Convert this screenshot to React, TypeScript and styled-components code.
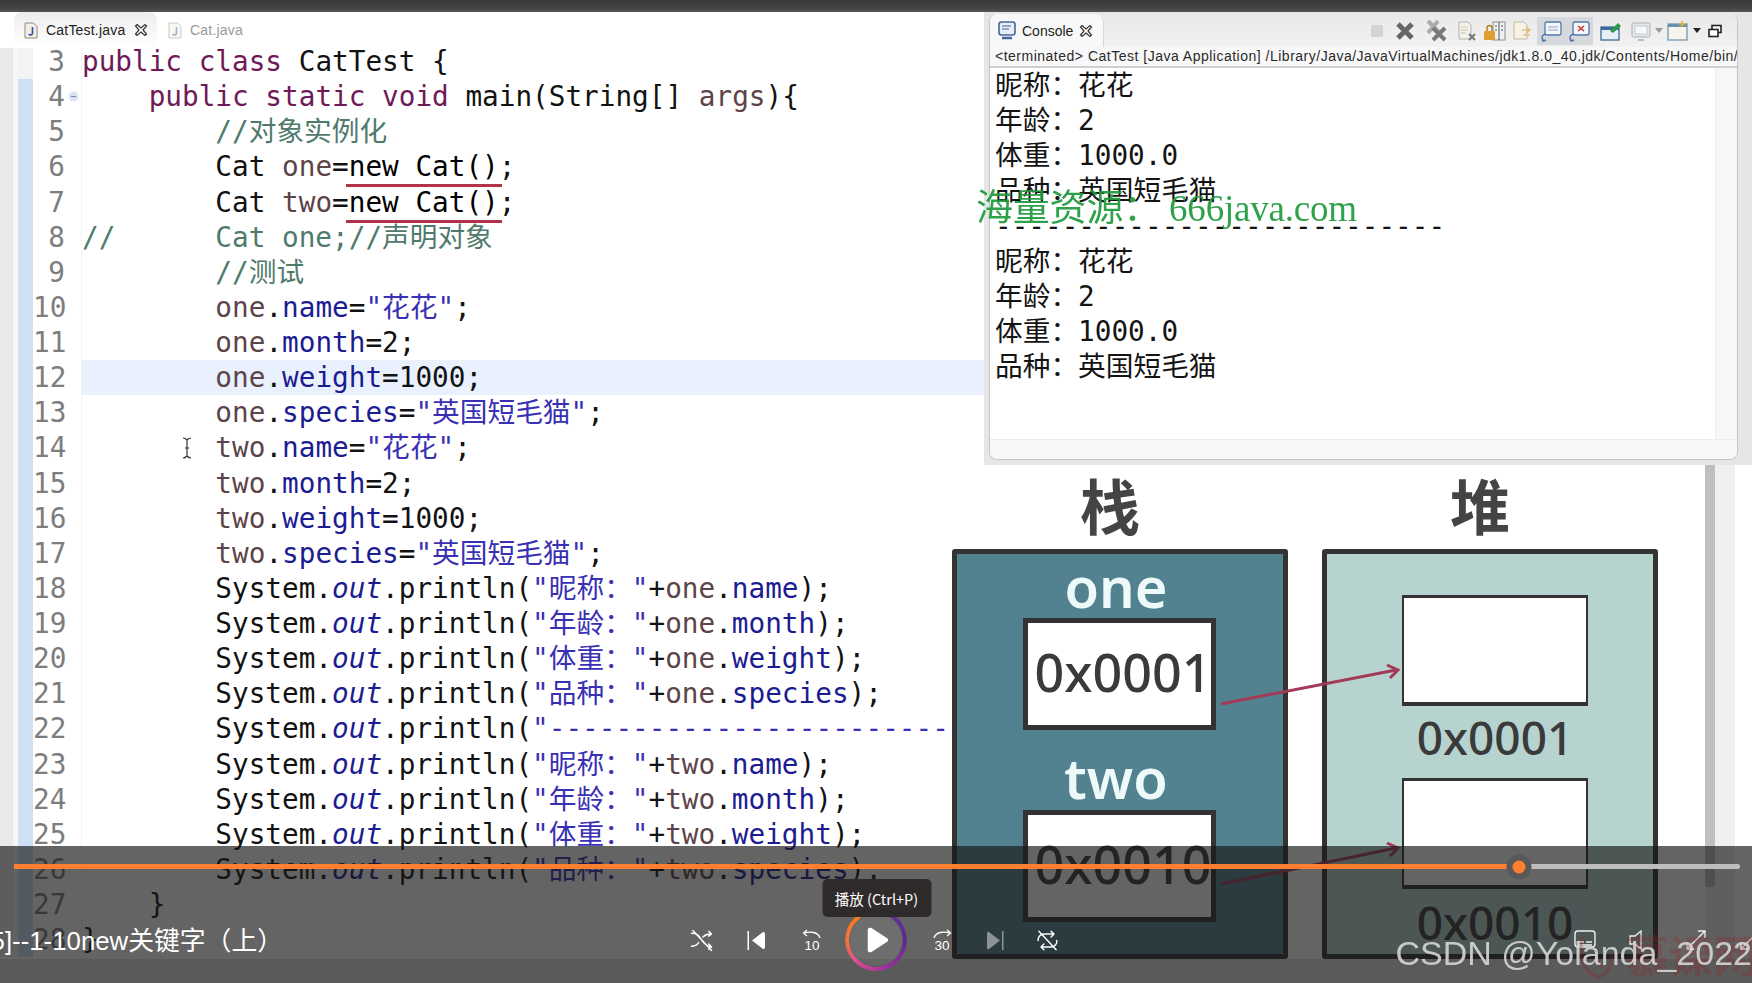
import React from "react";
import styled, { createGlobalStyle } from "styled-components";

const MONO = `"DejaVu Sans Mono", "Noto Sans CJK SC", monospace`;
const LINE = 35.14;

const GlobalStyle = createGlobalStyle`
  html, body {
    margin: 0;
    padding: 0;
    background: #e0e0e0;
    overflow: hidden;
  }
  * {
    box-sizing: border-box;
  }
`;

const Screen = styled.div`
  position: relative;
  width: 1752px;
  height: 983px;
  overflow: hidden;
  background: #e0e0e0;
  font-family: "Liberation Sans", sans-serif;
`;

const TopBar = styled.div`
  height: 12px;
  background: linear-gradient(#3a3a3a, #444 70%, #555);
`;

const Main = styled.div`
  display: flex;
  height: 947px;
  overflow: hidden;
  background: #fff;
`;

/* editor */

const Editor = styled.div`
  width: 984px;
  flex: none;
  overflow: hidden;
`;

const TabBar = styled.div`
  position: relative;
  z-index: 1;
  display: flex;
  align-items: center;
  height: 36px;
  padding-left: 14px;
  background: #fff;
`;

const EditorTab = styled.div<{ $active?: boolean }>`
  display: flex;
  align-items: center;
  height: 36px;
  padding: 0 9px 0 ${(p) => (p.$active ? 10 : 11)}px;
  gap: 8px;
  width: ${(p) => (p.$active ? "143px" : "auto")};
  font-size: 14px;
  letter-spacing: 0.2px;
  color: ${(p) => (p.$active ? "#222" : "#9a9a9a")};
  border-radius: 8px 8px 0 0;
  background: ${(p) => (p.$active ? "linear-gradient(#ededed, #f8f8f8 60%, #fff)" : "transparent")};
`;

const TabLabel = styled.span`
  flex: 1;
  white-space: nowrap;
`;

const CodeList = styled.div`
  margin-top: -4px;
  font-family: ${MONO};
  font-size: 27.7px;
`;

const CodeRow = styled.div`
  display: flex;
  height: ${LINE}px;
  line-height: ${LINE}px;
  white-space: pre;
`;

const LeftEdge = styled.div`
  width: 18px;
  flex: none;
  background: linear-gradient(90deg, #e9e9e9 13px, #f6f6f6 13px);
`;

const Ruler = styled.div<{ $changed: boolean }>`
  width: 15px;
  flex: none;
  background: ${(p) => (p.$changed ? "#cfe0f5" : "#f3f3f3")};
`;

const LineNo = styled.div`
  width: 32px;
  flex: none;
  text-align: right;
  color: #7d7d7d;
`;

const FoldCell = styled.div`
  display: flex;
  align-items: center;
  justify-content: center;
  width: 17px;
  flex: none;
  border-right: 1px solid #f3f3f3;
`;

const CodeCell = styled.div<{ $current?: boolean }>`
  flex: 1;
  background: ${(p) => (p.$current ? "#e8f1fd" : "transparent")};
`;

const COLORS = {
  plain: "#121212",
  kw: "#6f1a57",
  local: "#5c4448",
  field: "#1c1c92",
  str: "#3a30b4",
  note: "#4f7a6c",
  num: "#121212",
};

type Kind = keyof typeof COLORS;

const Tok = styled.span<{ $k: Kind; $italic?: boolean }>`
  color: ${(p) => COLORS[p.$k]};
  font-style: ${(p) => (p.$italic ? "italic" : "normal")};
`;

const RedLine = styled.span`
  position: relative;
  &::after {
    content: "";
    position: absolute;
    left: -3px;
    right: -3px;
    bottom: -4px;
    height: 3px;
    background: #b5304a;
  }
`;

const IBeam = styled.svg`
  position: absolute;
  left: 181px;
  top: 437px;
`;

type Piece = [Kind, string] | ["out", string] | ["red", string];
const I = "        ";

const println = (label: string, v: string, f: string): Piece[] => [
  ["plain", I + "System."],
  ["out", "out"],
  ["plain", ".println("],
  ["str", `"${label}："`],
  ["plain", "+"],
  ["local", v],
  ["plain", "."],
  ["field", f],
  ["plain", ");"],
];

const assign = (v: string, f: string, val: Piece): Piece[] => [
  ["plain", I],
  ["local", v],
  ["plain", "."],
  ["field", f],
  ["plain", "="],
  val,
  ["plain", ";"],
];

const CODE: Piece[][] = [
  [["kw", "public class"], ["plain", " CatTest {"]],
  [["plain", "    "], ["kw", "public static void"], ["plain", " main(String[] "], ["local", "args"], ["plain", "){"]],
  [["note", I + "//对象实例化"]],
  [["plain", I + "Cat "], ["local", "one"], ["plain", "="], ["red", "new Cat()"], ["plain", ";"]],
  [["plain", I + "Cat "], ["local", "two"], ["plain", "="], ["red", "new Cat()"], ["plain", ";"]],
  [["note", "//      Cat one;//声明对象"]],
  [["note", I + "//测试"]],
  assign("one", "name", ["str", '"花花"']),
  assign("one", "month", ["num", "2"]),
  assign("one", "weight", ["num", "1000"]),
  assign("one", "species", ["str", '"英国短毛猫"']),
  assign("two", "name", ["str", '"花花"']),
  assign("two", "month", ["num", "2"]),
  assign("two", "weight", ["num", "1000"]),
  assign("two", "species", ["str", '"英国短毛猫"']),
  println("昵称", "one", "name"),
  println("年龄", "one", "month"),
  println("体重", "one", "weight"),
  println("品种", "one", "species"),
  [["plain", I + "System."], ["out", "out"], ["plain", ".println("], ["str", '"----------------------------------"'], ["plain", ");"]],
  println("昵称", "two", "name"),
  println("年龄", "two", "month"),
  println("体重", "two", "weight"),
  println("品种", "two", "species"),
  [["plain", "    }"]],
  [["plain", "}"]],
];

const renderPiece = (p: Piece, i: number) => {
  if (p[0] === "out") return <Tok key={i} $k="field" $italic>{p[1]}</Tok>;
  if (p[0] === "red") return <RedLine key={i}>{p[1]}</RedLine>;
  return <Tok key={i} $k={p[0]}>{p[1]}</Tok>;
};

const JavaFileIcon = ({ faded }: { faded?: boolean }) => (
  <svg width="14" height="17" viewBox="0 0 14 17" opacity={faded ? 0.45 : 1}>
    <path d="M1 1h8.5L13 4.5V16H1z" fill="#f3efe4" stroke="#8f8a7c" />
    <path d="M8.5 5v6.2c0 1.9-2.8 2.2-3.8.8" fill="none" stroke="#3a56a8" strokeWidth="1.7" />
  </svg>
);

const CloseGlyph = () => (
  <svg width="14" height="14" viewBox="0 0 14 14">
    <path d="M3 1.5 7 5l4-3.500 1.500 1.500L9 7l3.500 4-1.500 1.500L7 9l-4 3.500-1.500-1.500L5 7 1.500 3z" fill="#fff" stroke="#333" strokeWidth="1.200" />
  </svg>
);

/* console */

const RightSide = styled.div`
  flex: 1;
  min-width: 0;
  display: flex;
  flex-direction: column;
`;

const ConsoleWell = styled.div`
  height: 453px;
  flex: none;
  padding: 2px 14px 5px 5px;
  background: #e6e6e6;
`;

const ConsolePanel = styled.div`
  display: flex;
  flex-direction: column;
  height: 100%;
  border: 1px solid #c4c4c4;
  border-top: none;
  border-radius: 8px;
  background: #f7f7f7;
  overflow: hidden;
`;

const ConsoleHead = styled.div`
  display: flex;
  align-items: center;
  height: 33px;
  flex: none;
  padding-right: 10px;
  background: linear-gradient(#e9e9e9, #f2f2f2);
`;

const ConsoleTab = styled.div`
  display: flex;
  align-items: center;
  gap: 6px;
  width: 114px;
  height: 33px;
  padding-left: 8px;
  font-size: 14px;
  color: #222;
  background: #f8f8f8;
  border-radius: 8px 8px 0 0;
  border-right: 1px solid #d8d8d8;
`;

const Toolbar = styled.div`
  display: flex;
  align-items: center;
  margin-left: auto;
`;

const ToolSlot = styled.div<{ $on?: boolean; $w?: number }>`
  display: flex;
  align-items: center;
  justify-content: center;
  width: ${(p) => p.$w ?? 28}px;
  height: 28px;
  background: ${(p) => (p.$on ? "#d5d8dc" : "transparent")};
`;

const InfoLine = styled.div`
  height: 21px;
  flex: none;
  padding-left: 5px;
  font-size: 14px;
  letter-spacing: 0.5px;
  line-height: 19px;
  color: #2a2a2a;
  white-space: nowrap;
  overflow: hidden;
  background: #f8f8f8;
  border-bottom: 2px solid #cfcfcf;
`;

const ConsoleBody = styled.div`
  flex: 1;
  margin-right: 21px;
  padding-left: 5px;
  background: #fff;
  font-family: ${MONO};
  font-size: 27.7px;
  color: #141414;
  border-right: 1px solid #ececec;
`;

const OutLine = styled.div`
  height: ${LINE}px;
  line-height: ${LINE}px;
  white-space: pre;
`;

const ConsoleFoot = styled.div`
  height: 20px;
  flex: none;
  background: #f8f8f8;
  border-top: 1px solid #ececec;
`;

const Watermark = styled.div`
  position: absolute;
  left: 976px;
  top: 186px;
  font-family: "Liberation Serif", "Noto Sans CJK SC", serif;
  font-size: 37px;
  letter-spacing: -0.2px;
  line-height: 46px;
  color: #1f9a3c;
  white-space: pre;
  opacity: 0.92;
`;

/* diagram */

const DiagramPane = styled.div`
  position: relative;
  flex: 1;
  display: flex;
  margin-left: -32px;
  background: #fff;
`;

const Diagram = styled.div`
  display: grid;
  grid-template-columns: 336px 336px;
  grid-template-rows: 84px 410px;
  column-gap: 34px;
  width: 706px;
  flex: none;
`;

const Heading = styled.div`
  display: flex;
  align-items: center;
  justify-content: center;
  padding: 0 20px 8px 0;
  font-family: "Noto Sans CJK SC", sans-serif;
  font-size: 60px;
  font-weight: 700;
  color: #444;
`;

const MemoryBox = styled.div<{ $heap?: boolean }>`
  display: grid;
  justify-items: center;
  align-items: center;
  grid-template-rows: ${(p) => (p.$heap ? "41px 111px 72px 111px 1fr" : "64px 112px 80px 112px 1fr")};
  border: 5px solid #333;
  border-radius: 3px;
  background: ${(p) => (p.$heap ? "#b7d3cf" : "#52828f")};
`;

const VarName = styled.div<{ $low?: boolean }>`
  padding-top: ${(p) => (p.$low ? 13 : 0)}px;
  margin-right: 8px;
  font-family: "Noto Sans", sans-serif;
  font-size: 56px;
  font-weight: 600;
  line-height: 64px;
  color: #eefafa;
`;

const ValueCell = styled.div`
  display: flex;
  align-items: center;
  justify-content: center;
  width: 193px;
  height: 100%;
  margin-left: -2px;
  padding: 0 0 5px 8px;
  border: 5px solid #333;
  background: #fff;
  font-family: "Noto Sans", sans-serif;
  font-size: 52px;
  font-weight: 500;
  color: #3a3a3a;
`;

const HeapCell = styled.div`
  width: 186px;
  height: 100%;
  margin-left: 10px;
  border: solid #333;
  border-width: 3px 2px 4px;
  background: #fff;
`;

const Spacer = styled.div``;

const Address = styled.div<{ $first?: boolean }>`
  margin-left: 10px;
  padding-bottom: ${(p) => (p.$first ? 10 : 0)}px;
  font-family: "Noto Sans", sans-serif;
  font-size: 46px;
  font-weight: 500;
  line-height: 60px;
  color: #3a3a3a;
`;

const Arrows = styled.svg`
  position: absolute;
  left: 0;
  top: 0;
`;

const ScrollTrack = styled.div`
  width: 30px;
  flex: none;
  margin-left: 47px;
  background: #f0f0f0;
`;

const ScrollThumb = styled.div`
  width: 10px;
  height: 422px;
  background: #bfbfbf;
  border-radius: 0 0 4px 4px;
`;

/* player */

const Player = styled.div`
  position: absolute;
  left: 0;
  right: 0;
  top: 846px;
  bottom: 0;
  overflow: hidden;
  background: rgba(24, 24, 24, 0.67);
`;

const Progress = styled.div`
  position: relative;
  height: 5px;
  margin: 18px 12px 0 14px;
  border-radius: 2px;
  background: #bdbdbd;
`;

const ProgressFill = styled.div<{ $pct: number }>`
  width: ${(p) => p.$pct}%;
  height: 100%;
  background: #ff7f30;
`;

const ProgressThumb = styled.div<{ $pct: number }>`
  position: absolute;
  left: ${(p) => p.$pct}%;
  top: 50%;
  width: 25px;
  height: 25px;
  transform: translate(-50%, -50%);
  border-radius: 50%;
  border: 6px solid #585858;
  background: #ff7f30;
`;

const ControlRow = styled.div`
  display: flex;
  align-items: center;
  height: 60px;
  margin-top: 41px;
`;

const Title = styled.div`
  display: flex;
  justify-content: flex-end;
  width: 283px;
  margin-right: 391px;
  padding-bottom: 3px;
  flex: none;
  overflow: hidden;
  font-family: "Liberation Sans", "Noto Sans CJK SC", sans-serif;
  font-size: 25.8px;
  color: #fff;
  white-space: nowrap;
`;

const CtrlButton = styled.div<{ $w?: number }>`
  position: relative;
  display: flex;
  align-items: center;
  justify-content: center;
  flex: none;
  width: ${(p) => p.$w ?? 55}px;
  height: 60px;
`;

const RightControls = styled.div`
  display: flex;
  margin-left: 483px;
`;

const Ring = styled.div`
  position: absolute;
  left: 6px;
  top: -1px;
  width: 62px;
  height: 62px;
  border-radius: 50%;
  background: conic-gradient(#6d2f97 0deg, #5a2c8c 90deg, #a5309c 165deg, #dd4f8e 225deg, #f2703f 265deg, #f47b20 320deg, #6d2f97 350deg);
  -webkit-mask: radial-gradient(circle, transparent 26.5px, #000 27px);
  mask: radial-gradient(circle, transparent 26.5px, #000 27px);
`;

const RingInner = styled.div`
  position: absolute;
  left: 11px;
  top: 4px;
  width: 52px;
  height: 52px;
  border-radius: 50%;
  background: rgba(255, 255, 255, 0.07);
`;

const Tooltip = styled.div`
  position: absolute;
  left: 50%;
  bottom: 53px;
  display: flex;
  align-items: center;
  justify-content: center;
  width: 109px;
  height: 38px;
  transform: translateX(-50%);
  border-radius: 5px;
  background: #2f2b2b;
  font-family: "Noto Sans CJK SC", sans-serif;
  font-size: 14.5px;
  color: #fff;
  white-space: nowrap;
`;

const CsdnMark = styled.div`
  position: absolute;
  right: 0;
  bottom: 10px;
  font-size: 34px;
  line-height: 40px;
  color: #d6d6d6;
  white-space: nowrap;
  opacity: 0.9;
`;

const SchoolMark = styled.div`
  position: absolute;
  left: 1625px;
  bottom: 4px;
  font-family: "Noto Sans CJK SC", sans-serif;
  font-size: 44px;
  line-height: 50px;
  font-weight: 700;
  color: rgba(150, 40, 40, 0.3);
  white-space: nowrap;
`;

const Flame = styled.svg`
  position: absolute;
  left: 1575px;
  bottom: 2px;
`;

const Ico = ({ size = 23, children }: { size?: number; children: React.ReactNode }) => (
  <svg width={size} height={size} viewBox="0 0 32 32" fill="none" stroke="#fff" strokeWidth="2" strokeLinecap="round" strokeLinejoin="round">
    {children}
  </svg>
);

const Seek = ({ back, n }: { back?: boolean; n: string }) => (
  <svg width="20" height="22" viewBox="0 0 20 22" fill="none" stroke="#fff" strokeWidth="1.300">
    <g transform={back ? undefined : "translate(20 0) scale(-1 1)"}>
      <path d="M5 1 1.500 4 5 7" />
      <path d="M2 4c7-2 14-1 16 5" />
    </g>
    <text x="10" y="20.500" textAnchor="middle" fontFamily="Liberation Sans" fontSize="13.500" fill="#fff" stroke="none">{n}</text>
  </svg>
);

const Tool = {
  Stop: () => <svg width="16" height="16"><rect x="2" y="2" width="12" height="12" rx="1.500" fill="#d4d4d4" /></svg>,
  X: () => (
    <svg width="22" height="20" viewBox="0 0 22 20"><path d="M4 3 18 17M18 3 4 17" stroke="#666" strokeWidth="5" /></svg>
  ),
  XX: () => (
    <svg width="24" height="22" viewBox="0 0 24 22">
      <path d="M4 1l12 12M14 1 4 13" stroke="#aaa" strokeWidth="4" />
      <path d="M9 8l12 12M21 8 9 20" stroke="#777" strokeWidth="4" />
    </svg>
  ),
  Page: ({ c }: { c: string }) => (
    <svg width="20" height="22" viewBox="0 0 20 22">
      <path d="M2 2h9l3 3v14H2z" fill="#f4f1e6" stroke="#b3b3b3" />
      <path d="M4 7h7M4 10h7M4 13h5" stroke="#c4c4c4" />
      <path d="M12 14l6 6M18 14l-6 6" stroke={c} strokeWidth="2" />
    </svg>
  ),
  Lock: () => (
    <svg width="24" height="22" viewBox="0 0 24 22">
      <rect x="10" y="2" width="12" height="18" fill="#eef0f2" stroke="#8d8d8d" />
      <path d="M16 2v18M12 6h2M18 6h2M12 10h2M18 10h2" stroke="#555" />
      <rect x="1" y="11" width="11" height="9" rx="1" fill="#e0a030" />
      <path d="M4 11V8a2.500 2.500 0 0 1 5 0v3" fill="none" stroke="#b67f1c" strokeWidth="1.500" />
    </svg>
  ),
  Swap: () => (
    <svg width="22" height="22" viewBox="0 0 22 22">
      <path d="M2 2h10l3 3v14H2z" fill="#f6f2e4" stroke="#c0bba8" />
      <path d="M10 10h8M14 7l4 3-4 3M18 15h-7" fill="none" stroke="#e0c080" strokeWidth="1.500" />
    </svg>
  ),
  Bubble: ({ red }: { red?: boolean }) => (
    <svg width="24" height="24" viewBox="0 0 24 24">
      <rect x="6" y="3" width="16" height="13" rx="2" fill="#f3f6fa" stroke="#5278a8" strokeWidth="1.300" />
      {red ? <path d="M11 7l6 5M17 7l-6 5" stroke="#c83a3a" strokeWidth="1.600" /> : <path d="M9 8h10M9 11h10" stroke="#8aa4c4" />}
      <path d="M7 15c-4 1-5 3-3 6M3 19l1 3 3-1" fill="none" stroke="#4b72a6" strokeWidth="1.400" />
    </svg>
  ),
  Pin: () => (
    <svg width="24" height="22" viewBox="0 0 24 22">
      <rect x="2" y="7" width="18" height="13" fill="#e6eef6" stroke="#3f6b96" strokeWidth="1.300" />
      <rect x="2" y="7" width="18" height="3" fill="#3f6b96" />
      <path d="M11 11 19 3l3 3-8 7z" fill="#2f9a48" />
    </svg>
  ),
  Screen: () => (
    <svg width="22" height="22" viewBox="0 0 22 22">
      <rect x="2" y="3" width="18" height="14" rx="1.500" fill="#e4e8ec" stroke="#a8b0b8" />
      <rect x="5" y="6" width="12" height="8" fill="#f6f8fa" stroke="#c4cad0" />
      <path d="M8 20h6" stroke="#a8b0b8" strokeWidth="1.500" />
    </svg>
  ),
  Window: () => (
    <svg width="24" height="22" viewBox="0 0 24 22">
      <rect x="2" y="4" width="19" height="16" fill="#f6f4ea" stroke="#6d8fae" strokeWidth="1.200" />
      <rect x="2" y="4" width="19" height="3" fill="#6d8fae" />
      <path d="M16 1v6M13 4h6" stroke="#e0b040" strokeWidth="1.500" />
    </svg>
  ),
  Caret: ({ c }: { c: string }) => <svg width="8" height="6"><path d="M0 0h8L4 5z" fill={c} /></svg>,
  Restore: () => (
    <svg width="16" height="14" viewBox="0 0 16 14" fill="#fff" stroke="#222" strokeWidth="1.600">
      <rect x="5" y="1.500" width="9" height="7" />
      <rect x="2" y="5.500" width="9" height="7" />
    </svg>
  ),
};

const ConsoleIcon = () => (
  <svg width="18" height="19" viewBox="0 0 18 19">
    <rect x="1" y="1" width="16" height="13" rx="2.500" fill="#e8eef8" stroke="#44659e" strokeWidth="1.600" />
    <path d="M4 5h9M4 8h7" stroke="#44659e" />
    <path d="M4 17h10" stroke="#44659e" strokeWidth="2.500" />
  </svg>
);

const OUTPUT_BLOCK = ["昵称：花花", "年龄：2", "体重：1000.0", "品种：英国短毛猫"];

const App: React.FC = () => {
  return (
    <Screen>
      <GlobalStyle />
      <TopBar />
      <Main>
        <Editor>
          <TabBar>
            <EditorTab $active>
              <JavaFileIcon />
              <TabLabel>CatTest.java</TabLabel>
              <CloseGlyph />
            </EditorTab>
            <EditorTab>
              <JavaFileIcon faded />
              <TabLabel>Cat.java</TabLabel>
            </EditorTab>
          </TabBar>
          <CodeList>
            {CODE.map((pieces, i) => (
              <CodeRow key={i}>
                <LeftEdge />
                <Ruler $changed={i > 0} />
                <LineNo>{i + 3}</LineNo>
                <FoldCell>
                  {i === 1 && (
                    <svg width="11" height="11">
                      <circle cx="5.500" cy="5.500" r="5" fill="#dbe4f0" />
                      <path d="M3 5.500h5" stroke="#6d88aa" />
                    </svg>
                  )}
                </FoldCell>
                <CodeCell $current={i === 9}>{pieces.map(renderPiece)}</CodeCell>
              </CodeRow>
            ))}
          </CodeList>
        </Editor>
        <RightSide>
          <ConsoleWell>
            <ConsolePanel>
              <ConsoleHead>
                <ConsoleTab>
                  <ConsoleIcon />
                  Console
                  <CloseGlyph />
                </ConsoleTab>
                <Toolbar>
                  <ToolSlot><Tool.Stop /></ToolSlot>
                  <ToolSlot><Tool.X /></ToolSlot>
                  <ToolSlot $w={34}><Tool.XX /></ToolSlot>
                  <ToolSlot><Tool.Page c="#777" /></ToolSlot>
                  <ToolSlot><Tool.Lock /></ToolSlot>
                  <ToolSlot><Tool.Swap /></ToolSlot>
                  <ToolSlot $on><Tool.Bubble /></ToolSlot>
                  <ToolSlot $on><Tool.Bubble red /></ToolSlot>
                  <ToolSlot $w={36}><Tool.Pin /></ToolSlot>
                  <ToolSlot $w={24}><Tool.Screen /></ToolSlot>
                  <ToolSlot $w={12}><Tool.Caret c="#999" /></ToolSlot>
                  <ToolSlot $w={26}><Tool.Window /></ToolSlot>
                  <ToolSlot $w={12}><Tool.Caret c="#222" /></ToolSlot>
                  <ToolSlot $w={24}><Tool.Restore /></ToolSlot>
                </Toolbar>
              </ConsoleHead>
              <InfoLine>
                {"<terminated> CatTest [Java Application] /Library/Java/JavaVirtualMachines/jdk1.8.0_40.jdk/Contents/Home/bin/java"}
              </InfoLine>
              <ConsoleBody>
                {OUTPUT_BLOCK.map((t) => <OutLine key={t}>{t}</OutLine>)}
                <OutLine>{"-".repeat(27)}</OutLine>
                {OUTPUT_BLOCK.map((t) => <OutLine key={t}>{t}</OutLine>)}
              </ConsoleBody>
              <ConsoleFoot />
            </ConsolePanel>
          </ConsoleWell>
          <DiagramPane>
            <Diagram>
              <Heading>栈</Heading>
              <Heading>堆</Heading>
              <MemoryBox>
                <VarName>one</VarName>
                <ValueCell>0x0001</ValueCell>
                <VarName $low>two</VarName>
                <ValueCell>0x0010</ValueCell>
              </MemoryBox>
              <MemoryBox $heap>
                <Spacer />
                <HeapCell />
                <Address $first>0x0001</Address>
                <HeapCell />
                <Address>0x0010</Address>
              </MemoryBox>
            </Diagram>
            <ScrollTrack>
              <ScrollThumb />
            </ScrollTrack>
            <Arrows width="460" height="430" viewBox="0 0 460 430" fill="none" stroke="#a33a58" strokeWidth="3">
              <path d="M269 239 444 205" />
              <path d="M435 200 446 205 438 213" />
              <path d="M269 419 444 383" />
              <path d="M435 378 446 383 438 391" />
            </Arrows>
          </DiagramPane>
        </RightSide>
      </Main>
      <Watermark>海量资源： 666java.com</Watermark>
      <IBeam width="12" height="22" viewBox="0 0 12 22" fill="none" stroke="#333" strokeWidth="1.200">
        <path d="M2 1c2 0 3 1 4 2 1-1 2-2 4-2M6 3v16M2 21c2 0 3-1 4-2 1 1 2 2 4 2M4 11h4" />
      </IBeam>
      <Player>
        <Progress>
          <ProgressFill $pct={87.2} />
          <ProgressThumb $pct={87.2} />
        </Progress>
        <ControlRow>
          <Title>5]--1-10new关键字（上）</Title>
          <CtrlButton>
            <Ico>
              <path d="M2 6c8 0 10 3 14 9s7 9 14 10M2 24c5 0 8-2 10-5M18 11c2-2 5-4 10-4M26 3l4 4-4 3M26 21l4 4-4 3M4 2l26 28" />
            </Ico>
          </CtrlButton>
          <CtrlButton>
            <svg width="19" height="19" viewBox="0 0 19 19">
              <rect x="0.500" y="0" width="1.500" height="19" fill="#fff" />
              <path d="M5 9.500 16 1c1 0 2 .5 2 2v13c0 1.500-1 2-2 2z" fill="#fff" />
            </svg>
          </CtrlButton>
          <CtrlButton><Seek back n="10" /></CtrlButton>
          <CtrlButton $w={75}>
            <RingInner />
            <Ring />
            <svg width="24" height="26" viewBox="0 0 26 28">
              <path d="M3 3c0-2 2-3 4-2l17 11c1.500 1 1.500 3 0 4L7 27c-2 1-4 0-4-2z" fill="#fff" />
            </svg>
            <Tooltip>播放 (Ctrl+P)</Tooltip>
          </CtrlButton>
          <CtrlButton><Seek n="30" /></CtrlButton>
          <CtrlButton $w={51}>
            <svg width="18" height="19" viewBox="0 0 18 19" opacity="0.45">
              <path d="M1 2.500c0-1.500 1-2 2-1.500l11 8.500L3 18c-1 .5-2 0-2-1.500z" fill="#fff" />
              <rect x="16" y="0" width="1.500" height="19" fill="#fff" />
            </svg>
          </CtrlButton>
          <CtrlButton>
            <Ico>
              <path d="M25 7H11a8 8 0 0 0-8 9M7 25h14a8 8 0 0 0 8-9M21 3l4 4-4 4M11 21l-4 4 4 4M4 3l24 26" />
            </Ico>
          </CtrlButton>
          <RightControls>
            <CtrlButton $w={54}>
              <svg width="22" height="22" viewBox="0 0 22 22" fill="none" stroke="#f0f0f0" strokeWidth="1.400">
                <rect x="1" y="2" width="20" height="16" rx="3" />
                <path d="M4 13h6M12 13h6M4 16h14" />
              </svg>
            </CtrlButton>
            <CtrlButton $w={50}>
              <svg width="16" height="20" viewBox="0 0 16 20" fill="none" stroke="#f0f0f0" strokeWidth="1.300">
                <path d="M1 6h5l6-5v18l-6-5H1z" />
              </svg>
            </CtrlButton>
            <CtrlButton $w={68}>
              <svg width="20" height="20" viewBox="0 0 20 20" fill="none" stroke="#f0f0f0" strokeWidth="1.300">
                <path d="M12 1h7v7M19 1 1 19M1 12v7h7" />
              </svg>
            </CtrlButton>
            <CtrlButton $w={40}>
              <svg width="20" height="20" viewBox="0 0 20 20" fill="none" stroke="#f0f0f0" strokeWidth="1.300">
                <path d="M12 1h7v7M19 1 1 19M1 12v7h7" />
              </svg>
            </CtrlButton>
          </RightControls>
        </ControlRow>
        <Flame width="44" height="54" viewBox="0 0 44 54" fill="none" stroke="rgba(150,40,40,0.35)" strokeWidth="3">
          <path d="M8 10C2 28 8 46 24 50c10-4 14-14 12-24" />
          <path d="M22 20c-2 8 0 16 5 20" />
        </Flame>
        <SchoolMark>慕课网</SchoolMark>
        <CsdnMark>CSDN @Yolanda_2022</CsdnMark>
      </Player>
    </Screen>
  );
};

export default App;
